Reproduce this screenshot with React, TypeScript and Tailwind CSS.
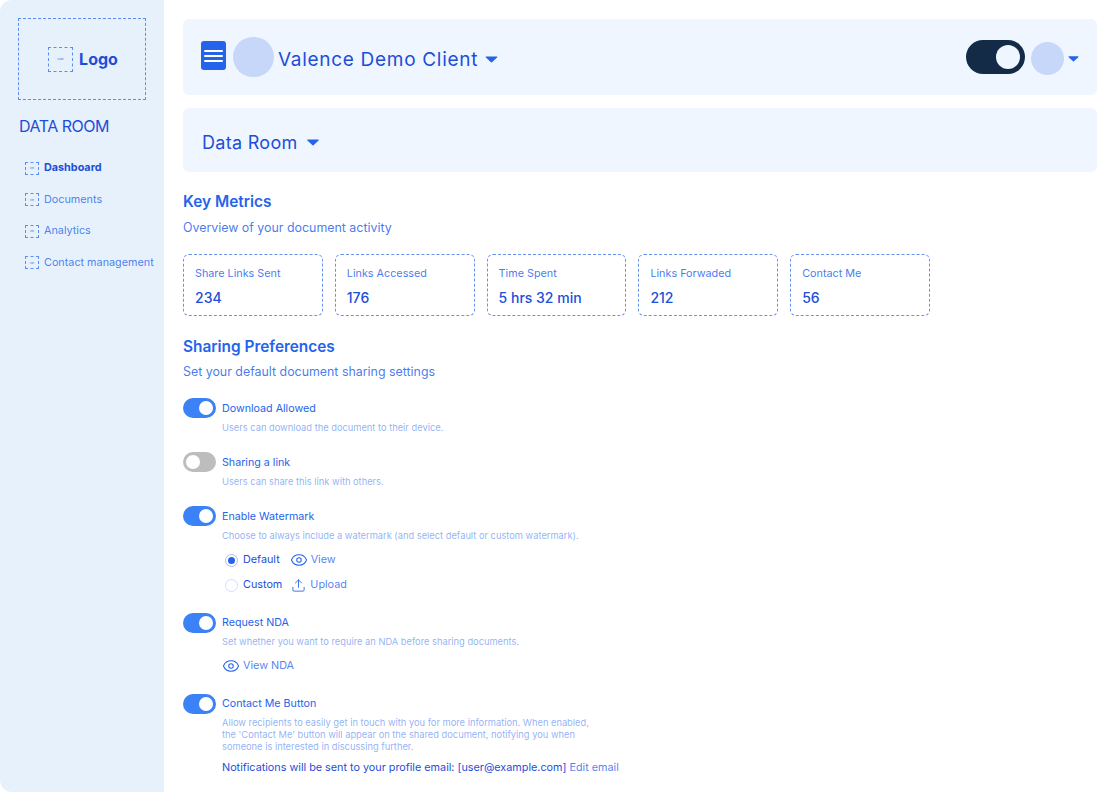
import React from 'react';
import { Eye, Upload } from 'lucide-react';

const metrics = [
  { label: 'Share Links Sent', value: '234' },
  { label: 'Links Accessed', value: '176' },
  { label: 'Time Spent', value: '5 hrs 32 min' },
  { label: 'Links Forwaded', value: '212' },
  { label: 'Contact Me', value: '56' },
];

const navItems = ['Dashboard', 'Documents', 'Analytics', 'Contact management'];

const Caret = ({ className }: { className: string }) => (
  <svg viewBox="0 0 12 7" className={className} fill="#2563eb">
    <path d="M0.8 0.4h10.4c.5 0 .8.6.4 1L6.5 6.2c-.3.3-.7.3-1 0L.4 1.4c-.4-.4-.1-1 .4-1z" />
  </svg>
);

const Toggle = ({ on = true }: { on?: boolean }) => (
  <div
    className={`w-[33px] h-[20px] rounded-full flex items-center shrink-0 px-[3px] ${
      on ? 'bg-[#3b82f6] justify-end' : 'bg-[#bdbdbd] justify-start'
    }`}
  >
    <div className="w-[14px] h-[14px] rounded-full bg-white" />
  </div>
);

const Placeholder = () => (
  <div className="w-[14px] h-[13px] border border-dashed border-[#2563eb]/70 flex items-center justify-center shrink-0">
    <span className="text-[2px] leading-none text-[#2563eb]">icon</span>
  </div>
);

const PrefRow = ({ on, title, children }: { on?: boolean; title: string; children: React.ReactNode }) => (
  <div>
    <div className="flex items-center gap-[6px] h-[20px]">
      <Toggle on={on} />
      <span className="text-[10.7px] text-[#2563eb] mt-[2px]">{title}</span>
    </div>
    <div className="pl-[39px]">{children}</div>
  </div>
);

const Hint = ({ children }: { children: React.ReactNode }) => (
  <p className="text-[9.3px] leading-[12px] text-[#2563eb]/50 mt-[3.5px] whitespace-nowrap">{children}</p>
);

export default function App() {
  return (
    <div className="w-[1116px] h-[792px] bg-white flex overflow-hidden font-['Inter',sans-serif]">
      {/* Sidebar */}
      <div className="w-[164px] h-full bg-[#e6f1fc] shrink-0 pt-[18px] pl-[18px] rounded-l-[12px]">
        <div className="w-[128px] h-[82px] border border-dashed border-[#2563eb]/70 flex items-center justify-center gap-[6px] pl-[2px]">
          <div className="w-[25px] h-[25px] border border-dashed border-[#2563eb]/70 flex items-center justify-center">
            <span className="text-[3px] leading-none text-[#2563eb]">icon</span>
          </div>
          <span className="text-[16px] leading-[20px] font-bold text-[#1d4ed8]">Logo</span>
        </div>
        <h1 className="text-[16px] leading-[20px] text-[#1d4ed8] mt-[16px] ml-[1px] tracking-[-0.5px]">DATA ROOM</h1>
        <nav className="mt-[24px] pl-[7px] flex flex-col gap-[15.6px]">
          {navItems.map((item, i) => (
            <div key={item} className="flex items-center gap-[5px] h-[16px]">
              <Placeholder />
              <span className={`text-[10.8px] whitespace-nowrap ${i === 0 ? 'font-bold text-[#1d4ed8]' : 'text-[#2563eb]/80'}`}>
                {item}
              </span>
            </div>
          ))}
        </nav>
      </div>

      {/* Main */}
      <div className="flex-1 pt-[19px] pl-[19px] pr-[19px]">
        <div className="h-[76px] bg-[#eff6ff] rounded-[6px] flex items-center justify-between pl-[18px] pr-[18px]">
          <div className="flex items-center">
            <div className="w-[25px] h-[29px] bg-[#2563eb] rounded-[3px] flex flex-col items-center justify-center gap-[3px] -mt-[3px]">
              <span className="w-[19px] h-[2px] bg-white rounded-full" />
              <span className="w-[19px] h-[2px] bg-white rounded-full" />
              <span className="w-[19px] h-[2px] bg-white rounded-full" />
            </div>
            <div className="w-[41px] h-[40px] rounded-full bg-[#c7d7f9] ml-[7px]" />
            <span className="text-[19px] leading-[24px] text-[#1d4ed8] tracking-[0.7px] ml-[4px] mt-[6px]">Valence Demo Client</span>
            <Caret className="w-[13px] h-[7px] ml-[7px] mt-[4px]" />
          </div>
          <div className="flex items-center">
            <div className="w-[59px] h-[34px] rounded-full bg-[#132b47] flex items-center justify-end pr-[5px]">
              <div className="w-[24px] h-[24px] rounded-full bg-[#eff6ff]" />
            </div>
            <div className="w-[33px] h-[33px] rounded-full bg-[#c7d7f9] ml-[6px] mt-[2px]" />
            <Caret className="w-[11px] h-[6px] ml-[4px] mt-[3px]" />
          </div>
        </div>

        <div className="h-[64px] bg-[#eff6ff] rounded-[6px] mt-[13px] flex items-center pl-[19px]">
          <span className="text-[18px] leading-[24px] text-[#1d4ed8] tracking-[0.3px] mt-[6px]">Data Room</span>
          <Caret className="w-[12px] h-[7px] ml-[9px] mt-[4px]" />
        </div>

        <h2 className="text-[15.4px] leading-[20px] font-semibold text-[#2563eb] mt-[20px]">Key Metrics</h2>
        <p className="text-[12.4px] leading-[16px] text-[#2563eb]/85 mt-[8px]">Overview of your document activity</p>

        <div className="flex gap-[12px] mt-[18px]">
          {metrics.map((m) => (
            <div key={m.label} className="w-[139.8px] h-[62px] border border-dashed border-[#2563eb]/70 rounded-[6px] pl-[11px] pt-[12px]">
              <div className="text-[10.8px] leading-[14px] text-[#2563eb]/85">{m.label}</div>
              <div className="text-[14px] leading-[18px] font-medium text-[#1d4ed8] mt-[8px]">{m.value}</div>
            </div>
          ))}
        </div>

        <h2 className="text-[15.4px] leading-[20px] font-semibold text-[#2563eb] mt-[21px]">Sharing Preferences</h2>
        <p className="text-[12.4px] leading-[16px] text-[#2563eb]/85 mt-[7px]">Set your default document sharing settings</p>

        <div className="mt-[18px] flex flex-col gap-[18.5px]">
          <PrefRow title="Download Allowed">
            <Hint>Users can download the document to their device.</Hint>
          </PrefRow>
          <PrefRow on={false} title="Sharing a link">
            <Hint>Users can share this link with others.</Hint>
          </PrefRow>
          <PrefRow title="Enable Watermark">
            <Hint>Choose to always include a watermark (and select default or custom watermark).</Hint>
            <div className="flex items-center h-[18px] mt-[9.5px] text-[10.8px] text-[#1d4ed8]">
              <div className="w-[13px] h-[13px] rounded-full border border-[#2563eb]/40 flex items-center justify-center ml-[3px]">
                <div className="w-[7px] h-[7px] rounded-full bg-[#2563eb]" />
              </div>
              <span className="ml-[5px]">Default</span>
              <Eye className="w-[18px] h-[18px] ml-[10px] text-[#2563eb]" strokeWidth={1.4} />
              <span className="ml-[3px] text-[#2563eb]/80">View</span>
            </div>
            <div className="flex items-center h-[18px] mt-[7px] text-[10.8px] text-[#1d4ed8]">
              <div className="w-[13px] h-[13px] rounded-full border border-[#2563eb]/20 ml-[3px]" />
              <span className="ml-[5px]">Custom</span>
              <Upload className="w-[15px] h-[15px] ml-[9px] text-[#2563eb]" strokeWidth={1.4} />
              <span className="ml-[4px] text-[#2563eb]/80">Upload</span>
            </div>
          </PrefRow>
          <PrefRow title="Request NDA">
            <Hint>Set whether you want to require an NDA before sharing documents.</Hint>
            <div className="flex items-center h-[18px] mt-[9px] text-[10.8px]">
              <Eye className="w-[18px] h-[18px] text-[#2563eb]" strokeWidth={1.4} />
              <span className="ml-[3px] text-[#2563eb]/80">View NDA</span>
            </div>
          </PrefRow>
          <PrefRow title="Contact Me Button">
            <Hint>
              Allow recipients to easily get in touch with you for more information. When enabled,
              <br />
              the 'Contact Me' button will appear on the shared document, notifying you when
              <br />
              someone is interested in discussing further.
            </Hint>
            <p className="text-[10.8px] leading-[14px] text-[#1d4ed8] mt-[7.5px] whitespace-nowrap">
              Notifications will be sent to your profile email: [user@example.com]{' '}
              <span className="text-[#2563eb]/80">Edit email</span>
            </p>
          </PrefRow>
        </div>
      </div>
    </div>
  );
}
